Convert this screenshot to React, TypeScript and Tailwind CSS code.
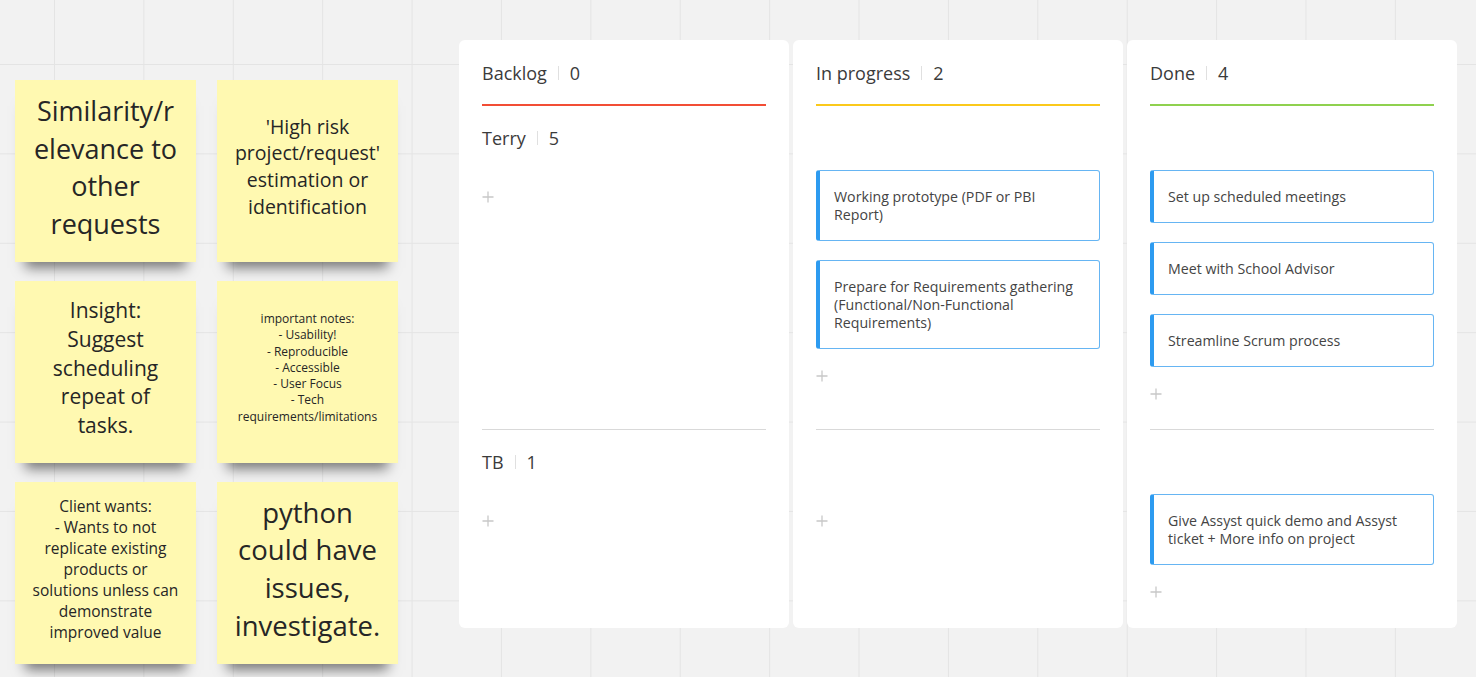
import React from 'react';

type Sticky = { lines: string[]; size: string; leading: string };

const stickies: Sticky[] = [
  { lines: ['Similarity/r', 'elevance to', 'other', 'requests'], size: 'text-[27px]', leading: 'leading-[37.5px]' },
  { lines: ["'High risk", "project/request'", 'estimation or', 'identification'], size: 'text-[19.5px]', leading: 'leading-[26.7px]' },
  { lines: ['Insight:', 'Suggest', 'scheduling', 'repeat of', 'tasks.'], size: 'text-[21px]', leading: 'leading-[28.7px]' },
  {
    lines: ['important notes:', '- Usability!', '- Reproducible', '- Accessible', '- User Focus', '- Tech', 'requirements/limitations'],
    size: 'text-[12px]',
    leading: 'leading-[16.3px]',
  },
  {
    lines: ['Client wants:', '- Wants to not', 'replicate existing', 'products or', 'solutions unless can', 'demonstrate', 'improved value'],
    size: 'text-[15.5px]',
    leading: 'leading-[21px]',
  },
  { lines: ['python', 'could have', 'issues,', 'investigate.'], size: 'text-[27.5px]', leading: 'leading-[37.7px]' },
];

type Lane = { title?: string; count?: number; cards: string[] };
type Column = { title: string; count: number; accent: string; lanes: [Lane, Lane] };

const columns: Column[] = [
  {
    title: 'Backlog',
    count: 0,
    accent: 'bg-[#f24d35]',
    lanes: [
      { title: 'Terry', count: 5, cards: [] },
      { title: 'TB', count: 1, cards: [] },
    ],
  },
  {
    title: 'In progress',
    count: 2,
    accent: 'bg-[#fbc91b]',
    lanes: [
      {
        cards: [
          'Working prototype (PDF or PBI Report)',
          'Prepare for Requirements gathering (Functional/Non-Functional Requirements)',
        ],
      },
      { cards: [] },
    ],
  },
  {
    title: 'Done',
    count: 4,
    accent: 'bg-[#8fd14f]',
    lanes: [
      { cards: ['Set up scheduled meetings', 'Meet with School Advisor', 'Streamline Scrum process'] },
      { cards: ['Give Assyst quick demo and Assyst ticket + More info on project'] },
    ],
  },
];

function PlusIcon() {
  return (
    <svg width="12" height="12" viewBox="0 0 12 12" className="block">
      <path d="M6 0.5v11M0.5 6h11" stroke="#c8c8c8" strokeWidth="1.3" />
    </svg>
  );
}

function Counter({ title, count }: { title: string; count: number }) {
  return (
    <div className="flex items-center h-[24px] text-[18px] text-[#3b3b3b]">
      <span>{title}</span>
      <span className="mx-[11px] w-px h-[14px] bg-[#e0e0e0]" />
      <span>{count}</span>
    </div>
  );
}

function LaneBlock({ lane, tall }: { lane: Lane; tall: boolean }) {
  return (
    <div className={`${tall ? 'h-[324px] border-b border-[#d9d9d9]' : 'flex-1'} pt-[20px]`}>
      <div className="h-[24px]">{lane.title && <Counter title={lane.title} count={lane.count ?? 0} />}</div>
      <div className="mt-[20px] flex flex-col gap-[19px]">
        {lane.cards.map((c) => (
          <div
            key={c}
            className="border border-[#66b5f3] border-l-[4px] border-l-[#2d9bf0] rounded-[3px] pl-[14px] pr-3 pt-[17px] pb-[16px] text-[14.2px] leading-[18px] text-[#444]"
          >
            {c}
          </div>
        ))}
      </div>
      <div className="mt-[21px]">
        <PlusIcon />
      </div>
    </div>
  );
}

export default function App() {
  return (
    <div
      className="w-[1476px] h-[677px] overflow-hidden flex items-start bg-[#f2f2f2] bg-[linear-gradient(to_right,#e4e4e4_1px,transparent_1px),linear-gradient(to_bottom,#e4e4e4_1px,transparent_1px)] bg-[size:89.4px_89.4px] bg-[position:54px_64px]"
      style={{ fontFamily: '"Open Sans", "Noto Sans", sans-serif' }}
    >
      {/* sticky notes */}
      <div className="ml-[15px] mt-[80px] grid grid-cols-[181px_181px] gap-x-[21px] gap-y-[19px]">
        {stickies.map((s, i) => (
          <div
            key={i}
            className="h-[182px] bg-[#fff9b1] flex items-center justify-center pb-2 text-center text-[#262626] shadow-[0_16px_12px_-10px_rgba(0,0,0,0.5)]"
          >
            <div className={`${s.size} ${s.leading}`}>
              {s.lines.map((l, j) => (
                <div key={j} className="whitespace-nowrap">
                  {l}
                </div>
              ))}
            </div>
          </div>
        ))}
      </div>

      {/* kanban */}
      <div className="ml-[61px] mt-[40px] flex gap-[4px]">
        {columns.map((col) => (
          <div key={col.title} className="w-[330px] h-[588px] bg-white rounded-[6px] px-[23px] flex flex-col">
            <div className="pt-[21px]">
              <Counter title={col.title} count={col.count} />
            </div>
            <div className={`mt-[19px] h-[2px] ${col.accent}`} />
            <LaneBlock lane={col.lanes[0]} tall />
            <LaneBlock lane={col.lanes[1]} tall={false} />
          </div>
        ))}
      </div>
    </div>
  );
}
